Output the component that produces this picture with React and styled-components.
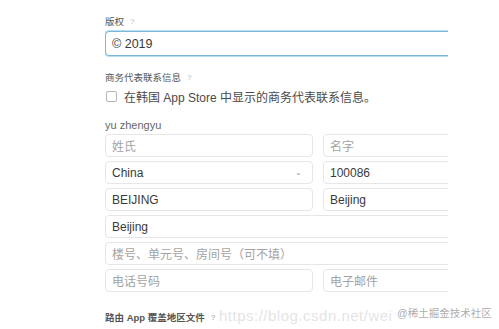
import React from "react";
import styled, { createGlobalStyle } from "styled-components";

const Global = createGlobalStyle`
  html, body { margin: 0; padding: 0; background: #fff; }
  body { font-family: "Liberation Sans", "Noto Sans CJK SC", sans-serif; color: #333; }
`;

const Page = styled.div`
  position: relative;
  width: 499px;
  height: 329px;
  overflow: hidden;
  background: #fff;
`;

const Clip = styled.div`
  margin-left: 105px;
  width: 343px;
  overflow: hidden;
  padding-top: 15px;
`;

const Form = styled.div`
  width: 430px;
  display: flex;
  flex-direction: column;
`;

const Label = styled.div`
  font-size: 9.5px;
  color: #555;
  display: flex;
  align-items: center;
  gap: 6px;
  height: 12px;
  margin-top: ${(p) => p.$mt || 0}px;
  margin-bottom: ${(p) => p.$mb || 0}px;
  font-weight: ${(p) => (p.$bold ? 600 : 400)};
`;

const Help = styled.span`
  color: #bbb;
  font-size: 8px;
`;

const Field = styled.div`
  box-sizing: border-box;
  height: ${(p) => p.$h || 23}px;
  border: 1px solid ${(p) => (p.$focus ? "#79b8da" : "#e6e6e6")};
  box-shadow: ${(p) => (p.$focus ? "0 0 0 1px #b9dcef" : "none")};
  border-radius: 4px;
  display: flex;
  align-items: center;
  justify-content: space-between;
  padding: 0 6px 0 6px;
  font-size: ${(p) => p.$fs || 12}px;
  color: ${(p) => (p.$ph ? "#a3a3a3" : "#3a3a3a")};
  background: #fff;
`;

const Row = styled.div`
  display: grid;
  grid-template-columns: ${(p) => (p.$full ? "1fr" : "208px 1fr")};
  column-gap: 10px;
  margin-top: ${(p) => p.$mt ?? 4}px;
`;

const CheckRow = styled.div`
  display: flex;
  align-items: center;
  gap: 7px;
  margin-top: 5px;
  font-size: 12px;
  color: #4a4a4a;
  padding-left: 1px;
`;

const Box = styled.span`
  width: 9px;
  height: 9px;
  border: 1px solid #b5b5b5;
  border-radius: 2px;
  display: inline-block;
`;

const Name = styled.div`
  font-size: 11px;
  color: #666;
  margin-top: 14px;
  height: 12px;
  line-height: 12px;
`;

const Chevron = styled.span`
  color: #999;
  font-size: 8px;
  margin-right: 4px;
`;

const Watermark = styled.div`
  position: absolute;
  left: ${(p) => p.$x}px;
  top: ${(p) => p.$y}px;
  font-size: ${(p) => p.$fs}px;
  color: ${(p) => p.$c};
  white-space: nowrap;
  letter-spacing: ${(p) => p.$ls || 0}px;
  font-family: "Liberation Sans", "Noto Sans CJK SC", sans-serif;
`;

const Divider = styled.div`
  height: 1px;
  background: #eee;
  margin-top: 6px;
`;

export default function App() {
  return (
    <Page>
      <Global />
      <Clip>
        <Form>
          <Label $mb={4}>
            版权 <Help>?</Help>
          </Label>
          <Field $focus $h={25} $fs={12.5}>© 2019</Field>
          <Label $mt={15}>
            商务代表联系信息 <Help>?</Help>
          </Label>
          <CheckRow>
            <Box />
            在韩国 App Store 中显示的商务代表联系信息。
          </CheckRow>
          <Name>yu zhengyu</Name>
          <Row $mt={3}>
            <Field $ph>姓氏</Field>
            <Field $ph>名字</Field>
          </Row>
          <Row>
            <Field>
              China <Chevron>⌄</Chevron>
            </Field>
            <Field>100086</Field>
          </Row>
          <Row>
            <Field>BEIJING</Field>
            <Field>Beijing</Field>
          </Row>
          <Row $full>
            <Field>Beijing</Field>
          </Row>
          <Row $full>
            <Field $ph>楼号、单元号、房间号（可不填）</Field>
          </Row>
          <Row>
            <Field $ph>电话号码</Field>
            <Field $ph>电子邮件</Field>
          </Row>
          <Label $mt={19} $bold>
            路由 App 覆盖地区文件 <Help>?</Help>
          </Label>
          <Divider />
        </Form>
      </Clip>
      <Watermark $x={219} $y={307} $fs={15} $ls={0.5} $c="rgba(200,200,200,0.5)">
        https://blog.csdn.net/wei
      </Watermark>
      <Watermark $x={397} $y={305} $fs={10.5} $c="rgba(150,150,150,0.8)">
        @稀土掘金技术社区
      </Watermark>
    </Page>
  );
}
